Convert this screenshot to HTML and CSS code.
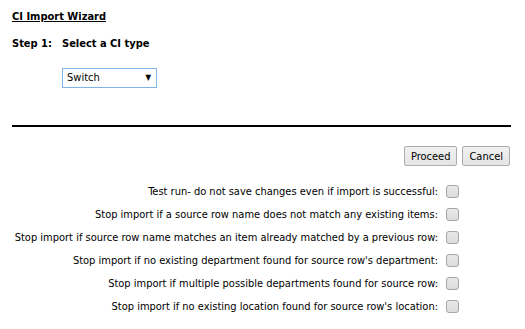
FILE: index.html
```html
<!DOCTYPE html>
<html lang="en">
<head>
    <meta charset="UTF-8">
    <title>CI Import Wizard</title>
    <link rel="stylesheet" href="styles.css">
</head>
<body>
    <div class="wizard">
        <h1 class="wizard-title">CI Import Wizard</h1>
        <div class="step">
            <span class="step-num">Step 1:</span>
            <div class="step-body">
                <span class="step-label">Select a CI type</span>
                <div class="select-box">
                    <span>Switch</span>
                    <span class="arrow">&#9660;</span>
                </div>
            </div>
        </div>
        <hr class="divider">
        <div class="actions">
            <button class="btn">Proceed</button>
            <button class="btn">Cancel</button>
        </div>
        <div class="options">
            <label>Test run- do not save changes even if import is successful:</label>
            <span class="check"></span>
            <label>Stop import if a source row name does not match any existing items:</label>
            <span class="check"></span>
            <label>Stop import if source row name matches an item already matched by a previous row:</label>
            <span class="check"></span>
            <label>Stop import if no existing department found for source row's department:</label>
            <span class="check"></span>
            <label>Stop import if multiple possible departments found for source row:</label>
            <span class="check"></span>
            <label>Stop import if no existing location found for source row's location:</label>
            <span class="check"></span>
        </div>
    </div>
</body>
</html>
```

FILE: styles.css
```css
body {
    margin: 0;
    font-family: 'DejaVu Sans Condensed', 'DejaVu Sans', sans-serif;
    font-size: 11px;
    color: #000;
    background: #fff;
}
.wizard {
    padding: 10px 14px 0 12px;
}
.wizard-title {
    font-size: 11px;
    font-weight: bold;
    text-decoration: underline;
    margin: 0 0 13px 0;
    line-height: 14px;
}
.step {
    display: flex;
    font-weight: bold;
    line-height: 14px;
}
.step-num {
    width: 50px;
}
.step-body {
    display: flex;
    flex-direction: column;
}
.select-box {
    margin-top: 17px;
    height: 18px;
    border: 1px solid #7eb4ea;
    display: flex;
    justify-content: space-between;
    align-items: center;
    padding: 0 5px 0 4px;
    box-sizing: content-box;
    font-weight: normal;
    width: 84px;
}
.arrow {
    font-size: 8px;
}
.divider {
    border: none;
    border-top: 2px solid #000;
    margin: 37px 0 0 0;
}
.actions {
    display: flex;
    justify-content: flex-end;
    gap: 5px;
    margin-top: 19px;
    padding-right: 1px;
}
.btn {
    font-family: inherit;
    font-size: 11px;
    height: 20px;
    padding: 0 6px;
    border: 1px solid #acacac;
    border-radius: 2px;
    background: linear-gradient(#f0f0f0, #e5e5e5);
    color: #000;
}
.options {
    display: grid;
    grid-template-columns: auto 13px;
    column-gap: 8px;
    row-gap: 10px;
    justify-content: end;
    align-items: center;
    margin-top: 19px;
    padding-right: 52px;
    text-align: right;
}
.check {
    width: 11px;
    height: 11px;
    border: 1px solid #a6a6a6;
    border-radius: 3px;
    background: linear-gradient(#e8e8e8, #dcdcdc);
}
```
